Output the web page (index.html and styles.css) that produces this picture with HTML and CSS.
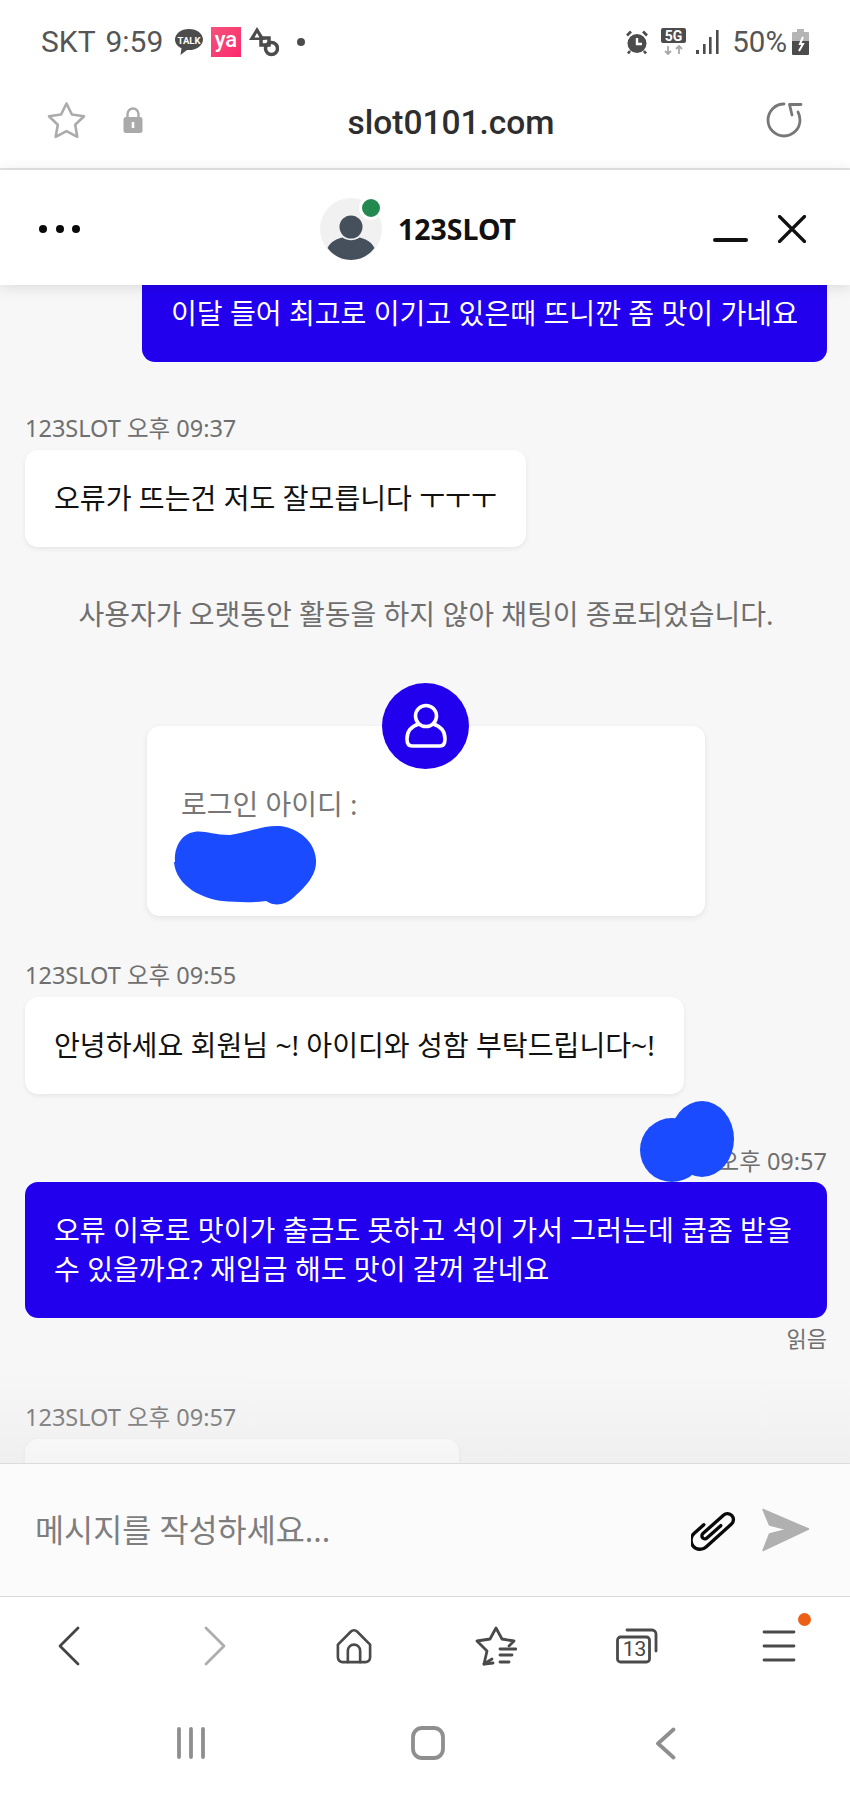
FILE: index.html
```html
<!DOCTYPE html>
<html lang="ko">
<head>
<meta charset="utf-8">
<title>123SLOT</title>
<link rel="stylesheet" href="styles.css">
</head>
<body>
<div class="phone">
  <div class="status">
    <span class="carrier">SKT 9:59</span>
    <span class="talk"><svg width="28" height="26" viewBox="0 0 28 26"><path d="M14 0C6 0 0 4.800 0 10.500c0 3.800 2.600 7 6.500 8.800L5.500 26l6.500-5c.7.100 1.300.1 2 .1 8 0 14-4.900 14-10.600S22 0 14 0z" class="ic-fill"/><text x="14" y="14.500" class="talk-text">TALK</text></svg></span>
    <span class="ya">ya</span>
    <svg class="shapes" width="30" height="30" viewBox="0 0 30 30"><path d="M8 0 16 13H0z" class="ic-fill"/><path d="M8 6 10.500 10.500H5.500z" class="ic-hole"/><rect x="12" y="11" width="8" height="7" class="ic-ring"/><circle cx="22.500" cy="21.500" r="6" class="ic-ring"/></svg>
    <span class="dot"></span>
    <span class="status-right">
      <svg width="24" height="24" viewBox="0 0 24 24"><circle cx="12" cy="13.500" r="9.500" class="ic-fill"/><path d="M12 8v6h5" class="ic-white"/><path d="M2 5.500 6 1.500M22 5.500 18 1.500M5 21l-2 2.500M19 21l2 2.500" class="ic-line"/></svg>
      <svg class="five" width="26" height="28" viewBox="0 0 26 28"><rect x="0" y="0" width="25" height="15" rx="2" class="ic-fill"/><text x="12.500" y="12.500" class="five-text">5G</text><path d="M7 18v8m-3-3 3 3 3-3M18 26v-8m-3 3 3-3 3 3" class="ic-arrows"/></svg>
      <svg class="signal" width="23" height="24" viewBox="0 0 23 24"><rect x="0" y="20" width="3" height="4" class="ic-fill"/><rect x="7" y="14" width="2.600" height="10" class="ic-fill"/><rect x="13" y="7" width="2.600" height="17" class="ic-fill"/><rect x="20" y="0" width="2.600" height="24" class="ic-fill"/></svg>
      <span class="pct">50%</span>
      <svg width="17" height="26" viewBox="0 0 17 26"><path d="M5 0h7v3h4a1 1 0 0 1 1 1v8H0V4a1 1 0 0 1 1-1h4z" fill="#b5b5b5"/><path d="M0 12h17v13a1 1 0 0 1-1 1H1a1 1 0 0 1-1-1z" class="ic-fill"/><path d="M11 8 8 15h3l-4 7" stroke="#fff" stroke-width="2" fill="none"/></svg>
    </span>
  </div>

  <div class="urlbar">
    <svg width="41" height="39" viewBox="0 0 41 39"><path d="M20.500 2.500l5.400 11 12.100 1.800-8.800 8.500 2.100 12-10.800-5.700-10.800 5.700 2.100-12L3 15.300l12.100-1.800z" class="star-line"/></svg>
    <svg class="lock" width="20" height="26" viewBox="0 0 20 26"><path d="M4.500 11V7a5.500 5.500 0 0 1 11 0v4" fill="none" stroke="#aaa" stroke-width="2.400"/><rect x="0.500" y="10" width="19" height="16" rx="2.500" fill="#aaa"/><rect x="8.700" y="15" width="2.600" height="6" fill="#fff"/></svg>
    <span class="url">slot0101.com</span>
    <svg width="38" height="36" viewBox="0 0 38 36"><path d="M19 2A16 16 0 1 0 35 18c0-3-.7-5.500-2-8" class="reload"/><path d="M36 2.500H24.500L27 13" class="reload"/></svg>
  </div>

  <header class="chat-head">
    <svg width="41" height="8" viewBox="0 0 41 8" class="dots"><circle cx="4" cy="4" r="4"/><circle cx="21" cy="4" r="4"/><circle cx="37" cy="4" r="4"/></svg>
    <div class="agent">
      <div class="avatar">
        <svg width="62" height="62" viewBox="0 0 62 62"><circle cx="31" cy="31" r="31" fill="#f1f1f1"/><circle cx="31" cy="29" r="11.500" fill="#46505c"/><path d="M7.500 50c3-6.500 10-9.500 15-10.500 5 3.500 12 3.500 17 0 5 1 12 4 15 10.500-5.500 7.500-14 12-23.500 12S13 57.500 7.500 50z" fill="#46505c"/></svg>
        <span class="online"></span>
      </div>
      <span class="agent-name">123SLOT</span>
    </div>
    <div class="win-ctl">
      <span class="minimize"></span>
      <svg width="28" height="28" viewBox="0 0 28 28"><path d="M1.500 1.500l25 25M26.500 1.500l-25 25" class="close"/></svg>
    </div>
  </header>

  <main class="chat">
    <div class="bubble mine cut">이달 들어 최고로 이기고 있은때 뜨니깐 좀 맛이 가네요</div>

    <div class="stamp s1">123SLOT 오후 09:37</div>
    <div class="bubble theirs">오류가 뜨는건 저도 잘모릅니다 ㅜㅜㅜ</div>

    <div class="sys">사용자가 오랫동안 활동을 하지 않아 채팅이 종료되었습니다.</div>

    <div class="card">
      <span class="card-badge"><svg width="42" height="46" viewBox="0 0 42 46"><circle cx="21" cy="13" r="10.500" class="badge-line"/><path d="M14 21C7 23 2 28 2 36c0 5 1.500 7 5 7h28c3.500 0 5-2 5-7 0-8-5-13-12-15" class="badge-line"/></svg></span>
      <div class="card-label">로그인 아이디 :</div>
      <svg class="blob-a" width="150" height="90" viewBox="0 0 150 90"><path d="M5 42C4 26 12 14 24 12c10-2 18 3 36 3 18-2 32-10 50-9 18 2 35 15 36 34 1 16-12 28-23 38-8 7-18 9-27 3-15 2-30 1-44 0-18-2-46-14-48-39z" class="redact"/></svg>
    </div>

    <div class="stamp s2">123SLOT 오후 09:55</div>
    <div class="bubble theirs">안녕하세요 회원님 ~! 아이디와 성함 부탁드립니다~!</div>

    <div class="stamp s3">오후 09:57</div>
    <div class="bubble mine full">
      오류 이후로 맛이가 출금도 못하고 석이 가서 그러는데 쿱좀 받을<br>수 있을까요? 재입금 해도 맛이 갈꺼 같네요
      <svg class="blob-b" width="94" height="84" viewBox="0 0 94 84"><circle cx="32" cy="50" r="32" class="redact"/><ellipse cx="62" cy="39" rx="32" ry="38" class="redact"/></svg>
    </div>
    <div class="read">읽음</div>

    <div class="stamp s4">123SLOT 오후 09:57</div>
    <div class="bubble theirs last"></div>
    <div class="fade"></div>
  </main>

  <div class="composer">
    <span class="placeholder">메시지를 작성하세요...</span>
    <svg width="48" height="42" viewBox="0 0 48 42"><g transform="rotate(-42 24 21) translate(24 21) scale(1.2) translate(-24 -21)"><path d="M20 11.500H9A7.500 7.500 0 0 0 9 26.500H37.500A5 5 0 0 0 37.500 16.500H14.500A2.500 2.500 0 0 0 14.500 21.500H30" class="clip"/></g></svg>
    <svg class="send" width="49" height="44" viewBox="0 0 49 44"><path d="M2 1.500 47.500 21 2 42.500 8.500 26 26 21.500 8.500 17z" fill="#b0b0b0" stroke="#b0b0b0" stroke-width="1.500" stroke-linejoin="round"/></svg>
  </div>

  <nav class="browser-nav">
    <svg class="nudge-l" width="22" height="40" viewBox="0 0 22 40"><path d="M20 2 2 20l18 18" class="nav-line"/></svg>
    <svg class="nudge-r" width="22" height="40" viewBox="0 0 22 40"><path d="M2 2l18 18L2 38" class="nav-line soft"/></svg>
    <svg class="home" width="36" height="36" viewBox="0 0 38 38"><path d="M2 17.500 15.500 4a5 5 0 0 1 7 0L36 17.500V31a5 5 0 0 1-5 5H7a5 5 0 0 1-5-5z" class="nav-icon"/><path d="M12.500 36V24a6.500 6.500 0 0 1 13 0v12" class="nav-icon"/></svg>
    <svg width="42" height="40" viewBox="0 0 42 40"><path d="M18 37 9 38l3-13L2 15l13-2 6-11 6 11 12 2-5 5" class="nav-icon"/><path d="M17 33l-8 5" class="nav-icon"/><path d="M25 23h16M25 29h12M25 36h9" class="nav-icon"/></svg>
    <span class="tabs"><svg width="42" height="36" viewBox="0 0 42 36"><rect x="1.500" y="9" width="32" height="25" rx="3" class="nav-icon"/><path d="M11 2h25a4 4 0 0 1 4 4v17" class="nav-icon"/></svg><span class="tabs-num">13</span></span>
    <span class="menu"><svg width="34" height="32" viewBox="0 0 34 32"><path d="M2 2h30M2 16h30M2 30h30" class="nav-icon"/></svg><span class="menu-dot"></span></span>
  </nav>

  <div class="sys-nav">
    <svg width="30" height="32" viewBox="0 0 30 32"><path d="M3 2v28M15 2v28M27 2v28" class="sys-line"/></svg>
    <svg width="34" height="34" viewBox="0 0 34 34"><rect x="2" y="2" width="30" height="30" rx="9" class="sys-line"/></svg>
    <svg width="21" height="33" viewBox="0 0 21 33"><path d="M18.500 2.500 3 16.500l15.500 14" class="sys-line"/></svg>
  </div>
</div>
</body>
</html>
```
FILE: styles.css
```css
* { box-sizing: border-box; }
html, body { margin: 0; padding: 0; }
body { background: #fff; font-family: "Noto Sans", "Noto Sans CJK KR", sans-serif; }
svg { display: block; flex: none; }

.phone { width: 850px; height: 1794px; display: flex; flex-direction: column; overflow: hidden; background: #fff; }

.ic-fill { fill: #4c4c4c; }
.ic-hole { fill: #fff; }
.ic-ring { fill: none; stroke: #4c4c4c; stroke-width: 3.500; }
.ic-white { fill: none; stroke: #fff; stroke-width: 2.400; }
.ic-line { fill: none; stroke: #4c4c4c; stroke-width: 2.600; }
.ic-arrows { fill: none; stroke: #a8a8a8; stroke-width: 1.800; }

.status { height: 72px; padding: 12px 41px 0; display: flex; align-items: center; color: #555; font-family: Roboto, sans-serif; }
.carrier { font-size: 30px; line-height: 36px; width: 134px; white-space: nowrap; word-spacing: 3px; }
.talk-text { font-family: Roboto, sans-serif; font-size: 9.500px; font-weight: 700; fill: #fff; text-anchor: middle; }
.ya { width: 30px; height: 30px; margin-left: 8px; background: linear-gradient(135deg, #f5527c, #fb2a6b); color: #fff; font-weight: 500; font-size: 22px; line-height: 25px; text-align: center; }
.shapes { margin-left: 8px; }
.dot { width: 8px; height: 8px; border-radius: 50%; background: #4c4c4c; margin-left: 18px; }
.status-right { margin-left: auto; display: flex; align-items: center; }
.five { margin-left: 12px; }
.five-text { font-family: Roboto, sans-serif; font-size: 14px; font-weight: 700; fill: #fff; text-anchor: middle; }
.signal { margin-left: 9px; }
.pct { font-size: 29.500px; line-height: 36px; margin-left: 13px; margin-right: 5px; }

.urlbar { height: 98px; border-bottom: 2px solid #e4e4e4; padding: 0 47px 0 46px; display: grid; grid-template-columns: auto auto 1fr auto; align-items: center; }
.star-line { fill: none; stroke: #ababab; stroke-width: 2.600; stroke-linejoin: round; }
.lock { margin-left: 36px; }
.url { font-family: Roboto, sans-serif; font-size: 33.500px; font-weight: 500; color: #2e2e2e; text-align: center; margin-right: 6px; padding-top: 4px; }
.reload { fill: none; stroke: #777; stroke-width: 2.800; stroke-linecap: round; stroke-linejoin: round; }

.chat-head { position: relative; z-index: 2; height: 115px; padding: 0 44px 0 39px; background: #fff; box-shadow: 0 2px 14px rgba(0,0,0,.12); display: flex; align-items: center; justify-content: space-between; }
.dots { fill: #0a0a0a; margin-top: 2px; }
.agent { display: flex; align-items: center; margin-left: 43px; margin-top: 2px; }
.avatar { position: relative; width: 62px; height: 62px; }
.online { position: absolute; right: -1px; top: -2px; width: 24px; height: 24px; border-radius: 50%; background: #23894f; border: 3px solid #fff; box-sizing: border-box; }
.agent-name { margin-left: 16px; font-size: 28.500px; line-height: 40px; font-weight: 700; color: #111; }
.win-ctl { display: flex; align-items: flex-end; margin-top: 2px; }
.minimize { width: 35px; height: 4px; border-radius: 2px; background: #111; margin-bottom: 1px; }
.close { stroke: #111; stroke-width: 3.200; stroke-linecap: round; fill: none; }
.win-ctl svg { margin-left: 30px; }

.chat { position: relative; flex: none; height: 1178px; padding: 0 23px 0 25px; overflow: hidden; background: #f7f7f7; display: flex; flex-direction: column; align-items: flex-start; }
.bubble { font-size: 28.100px; line-height: 39px; padding: 29px; border-radius: 13px; color: #111; flex: none; white-space: nowrap; }
.theirs { background: #fff; box-shadow: 0 2px 5px rgba(0,0,0,.07); }
.mine { position: relative; background: #2200ee; color: #fff; }
.cut { align-self: flex-end; padding-top: 9px; border-radius: 0 0 13px 13px; }
.full { width: 802px; }
.last { width: 434px; height: 97px; }
.stamp { font-size: 23.500px; line-height: 30px; color: #6f6f6f; margin-bottom: 7px; flex: none; }
.s1 { margin-top: 51px; }
.s2 { margin-top: 44px; }
.s3 { margin-top: 52px; align-self: flex-end; margin-bottom: 6px; }
.s4 { margin-top: 49px; }
.read { align-self: flex-end; font-size: 22px; line-height: 30px; margin-top: 5px; color: #6f6f6f; }
.sys { align-self: center; margin-top: 47px; font-size: 28px; line-height: 40px; color: #6f6f6f; white-space: nowrap; }
.card { position: relative; flex: none; width: 558px; height: 190px; margin: 92px 0 0 122px; padding: 58px 34px 0; background: #fff; border-radius: 13px; box-shadow: 0 2px 6px rgba(0,0,0,.08); }
.card-badge { position: absolute; left: 235px; top: -43px; width: 87px; height: 86px; border-radius: 50%; background: #2200ee; display: flex; align-items: center; justify-content: center; }
.badge-line { fill: none; stroke: #fff; stroke-width: 3.600; stroke-linejoin: round; }
.card-label { font-size: 28px; line-height: 40px; color: #777; }
.blob-a { position: absolute; left: 23px; top: 94px; }
.redact { fill: #1a4bff; }
.blob-b { position: absolute; right: 93px; top: -82px; }
.fade { position: absolute; left: 0; right: 0; bottom: 0; height: 90px; background: linear-gradient(to bottom, rgba(225,225,225,0), rgba(225,225,225,.35)); }

.composer { height: 134px; border-top: 1px solid #dcdcdc; border-bottom: 1px solid #dcdcdc; background: #fbfbfb; padding: 0 40px 0 35px; display: flex; align-items: center; }
.placeholder { font-size: 31.600px; line-height: 40px; color: #7e7e7e; margin-right: auto; }
.clip { fill: none; stroke: #0a0a0a; stroke-width: 2.800; stroke-linecap: round; }
.send { margin-left: 22px; }

.browser-nav { height: 97px; display: grid; grid-template-columns: repeat(6, 1fr); align-items: center; justify-items: center; }
.nudge-l { margin-right: 3px; }
.nudge-r { margin-left: 5px; }
.home { margin-top: 1px; }
.nav-line { fill: none; stroke: #444; stroke-width: 2.800; stroke-linecap: round; stroke-linejoin: round; }
.soft { stroke: #adadad; }
.nav-icon { fill: none; stroke: #4a4a4a; stroke-width: 2.800; stroke-linecap: round; stroke-linejoin: round; }
.tabs { position: relative; width: 42px; height: 36px; }
.tabs-num { position: absolute; left: 3px; top: 9px; width: 30px; text-align: center; font-family: Roboto, sans-serif; font-size: 21px; line-height: 25px; color: #444; }
.menu { position: relative; width: 34px; height: 32px; }
.menu-dot { position: absolute; right: -15px; top: -17px; width: 13px; height: 13px; border-radius: 50%; background: #ee5f16; }

.sys-nav { height: 100px; padding: 0 66px 2px 72px; display: grid; grid-template-columns: repeat(3, 1fr); align-items: center; justify-items: center; }
.sys-line { fill: none; stroke: #8f8f8f; stroke-width: 3.800; stroke-linecap: round; stroke-linejoin: round; }
```
